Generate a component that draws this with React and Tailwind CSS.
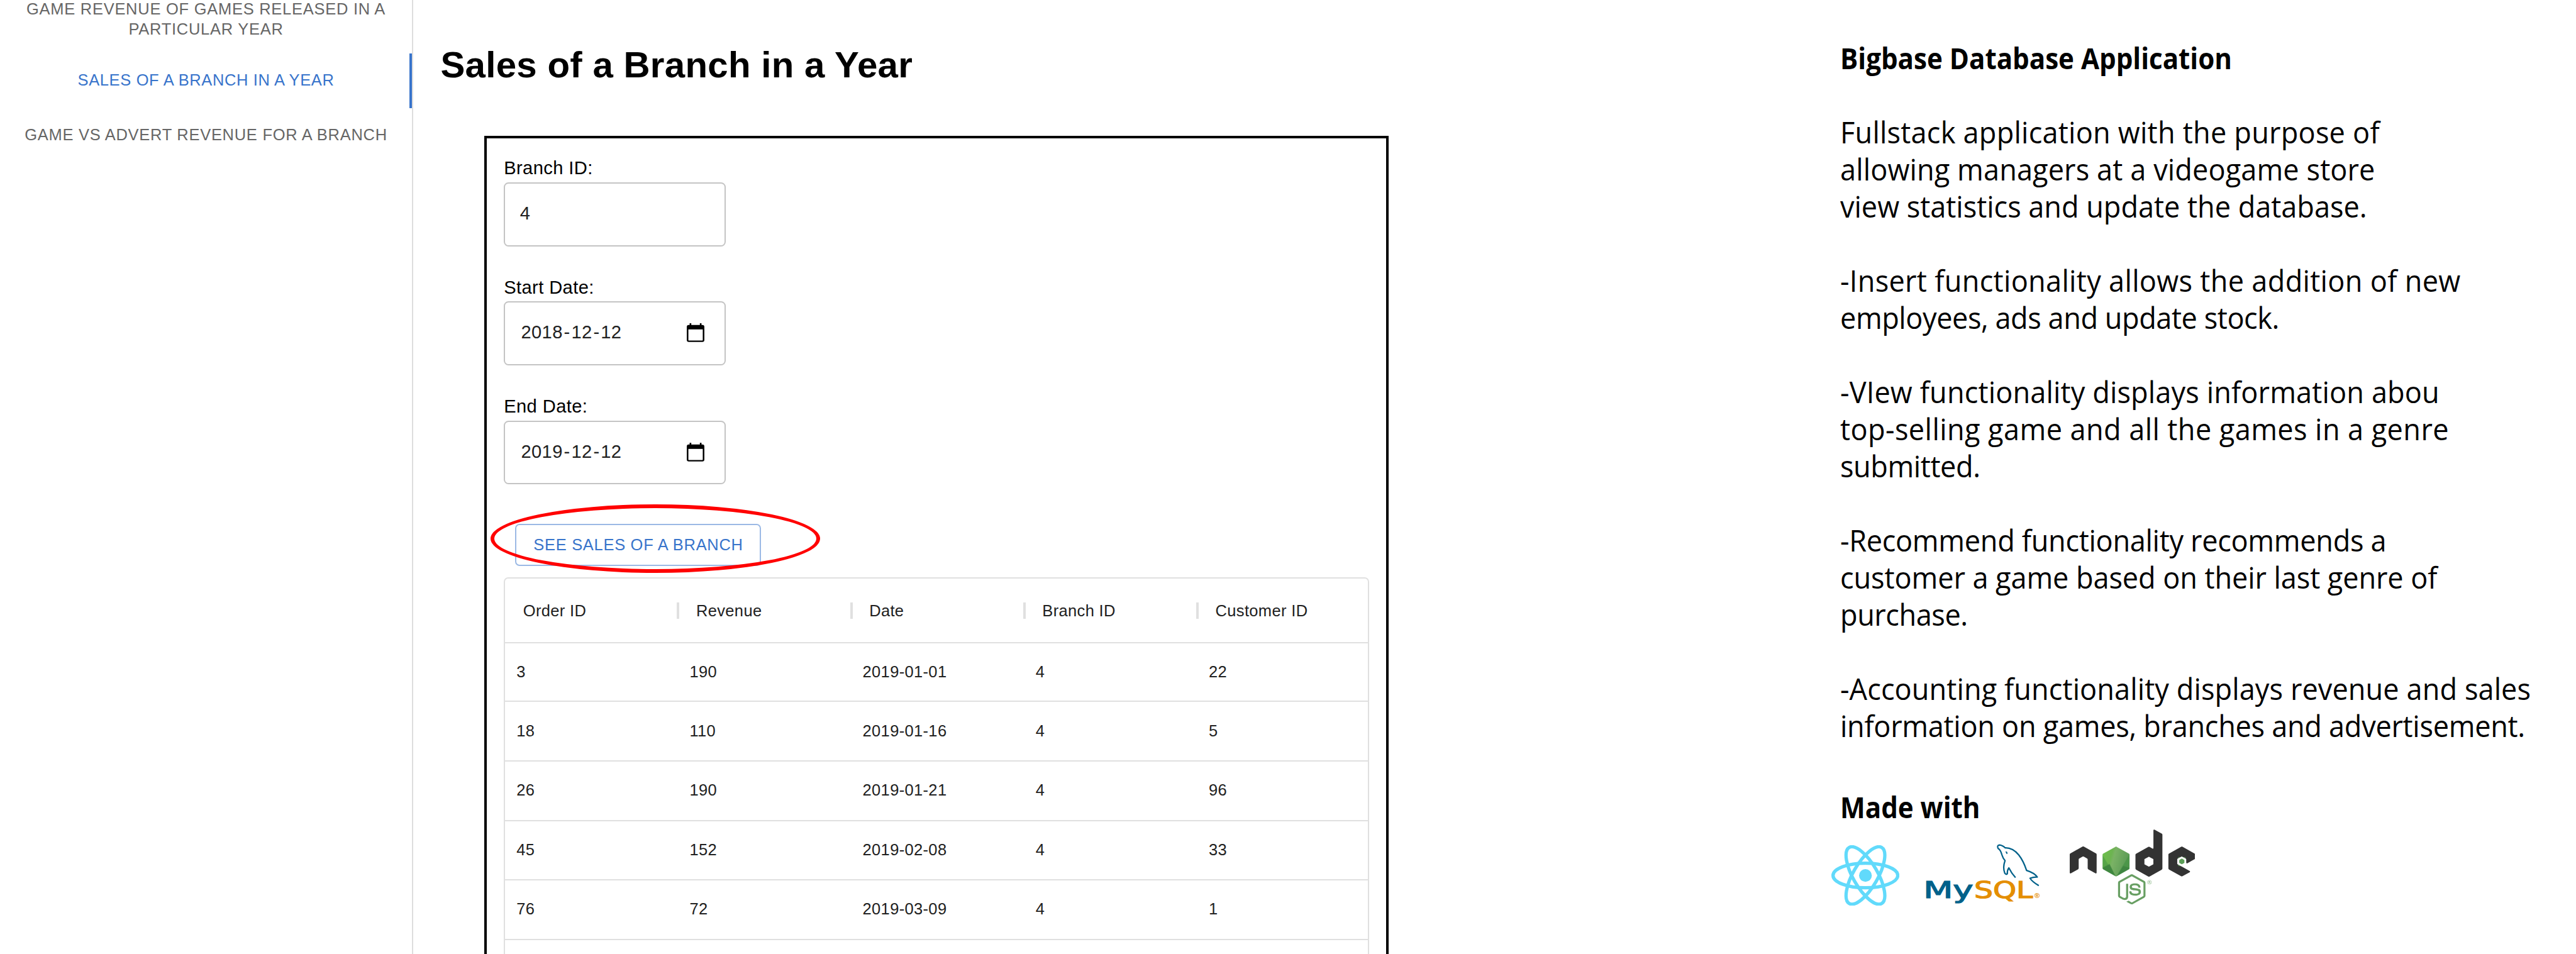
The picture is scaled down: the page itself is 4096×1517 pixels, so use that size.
import React from "react";
import { FaNode } from "react-icons/fa";

const ORDERS = [
  ["3", "190", "2019-01-01", "4", "22"],
  ["18", "110", "2019-01-16", "4", "5"],
  ["26", "190", "2019-01-21", "4", "96"],
  ["45", "152", "2019-02-08", "4", "33"],
  ["76", "72", "2019-03-09", "4", "1"],
];
const COLUMNS = ["Order ID", "Revenue", "Date", "Branch ID", "Customer ID"];

function Sidebar() {
  const tab =
    "flex shrink-0 flex-col items-center justify-center text-center text-[25.49px] leading-[31.8px] text-[#666666]";
  return (
    <nav className="flex h-full w-[657px] shrink-0 flex-col border-r-2 border-[#dddddd]">
      <div className={`${tab} h-[84.6px] justify-end pb-[22px] tracking-[0.74px]`}>
        <span className="whitespace-nowrap">GAME REVENUE OF GAMES RELEASED IN A</span>
        <span>PARTICULAR YEAR</span>
      </div>
      <div className="flex h-[87.4px] shrink-0 items-center border-r-4 border-[#3874cb] pb-[3px] pl-[4px] text-[25.49px] tracking-[0.65px] text-[#3874cb]">
        <span className="flex-1 text-center">SALES OF A BRANCH IN A YEAR</span>
      </div>
      <div className={`${tab} h-[87.4px] pb-[1px] tracking-[0.72px]`}>
        <span className="whitespace-nowrap">GAME VS ADVERT REVENUE FOR A BRANCH</span>
      </div>
    </nav>
  );
}

function CalendarIcon() {
  return (
    <svg viewBox="0 0 30 33" className="h-[30px] w-[28px]" fill="none" preserveAspectRatio="none">
      <rect x="1.4" y="4.5" width="27.2" height="27" rx="2" stroke="black" strokeWidth="2.7" />
      <path d="M1 4h28v6.8H1z" fill="black" />
      <path d="M6.3 0v5M23.7 0v5" stroke="black" strokeWidth="2.8" />
    </svg>
  );
}

function Field({ label, parts, date }) {
  return (
    <div className="flex flex-col">
      <label className="whitespace-nowrap text-[29.13px] leading-[36px] tracking-[0.4px] text-black">{label}</label>
      <div className="mt-[4.6px] flex h-[101.6px] w-[353px] items-center justify-between rounded-[7.5px] border-2 border-[#c4c4c4] pb-[2px] pl-[23.5px] pr-[32px] text-[29.13px] tracking-[0.37px] text-[#212121]">
        <div className={date ? "flex gap-[1.8px] pl-[1.8px]" : "flex"}>
          {parts.map((p, i) => (
            <span key={i}>{p}</span>
          ))}
        </div>
        {date && <CalendarIcon />}
      </div>
    </div>
  );
}

function OrdersTable() {
  return (
    <div className="mt-[18.7px] flex h-[900px] w-[1376px] shrink-0 flex-col rounded-[7px] border-2 border-[#e0e0e0] text-[25.49px] tracking-[0.35px] text-[#212121]">
      <div className="flex h-[103.2px] shrink-0 items-center border-b-2 border-[#e0e0e0]">
        {COLUMNS.map((c, i) => (
          <div
            key={c}
            className="flex w-[275.2px] shrink-0 items-center justify-between pl-[28.6px] last:w-[260px]"
          >
            <span>{c}</span>
            {i < 4 && <span className="-mr-[2px] h-[26px] w-[4px] bg-[#e0e0e0]" />}
          </div>
        ))}
      </div>
      {ORDERS.map((r, i) => (
        <div
          key={i}
          className="flex h-[94.66px] shrink-0 items-center border-b-2 border-[#e0e0e0] pb-[2px] nth-[2]:h-[92.8px]"
        >
          {r.map((v, j) => (
            <span key={j} className="w-[275.2px] shrink-0 pl-[18px] last:w-[260px]">
              {v}
            </span>
          ))}
        </div>
      ))}
    </div>
  );
}

function Main() {
  return (
    <main className="flex h-full w-[2268.5px] shrink-0 flex-col">
      <h1 className="mt-[72.7px] shrink-0 whitespace-nowrap pl-[43.5px] text-[58.25px] font-bold leading-[60px] tracking-[0.26px] text-black">
        Sales of a Branch in a Year
      </h1>
      <section className="relative ml-[113.2px] mt-[83.3px] flex h-[1500px] w-[1438px] shrink-0 flex-col border-4 border-black pl-[27px] pt-[29.5px]">
        <div className="flex flex-col gap-[47.2px]">
          <Field label="Branch ID:" parts={["4"]} />
          <Field label="Start Date:" parts={["2018", "-", "12", "-", "12"]} date />
          <Field label="End Date:" parts={["2019", "-", "12", "-", "12"]} date />
        </div>
        <button className="ml-[18.3px] mt-[62.7px] flex h-[66.5px] w-[391px] shrink-0 items-center justify-center whitespace-nowrap rounded-[7px] border-2 border-[#9bb9e5] pb-[1px] text-[25.49px] tracking-[0.7px] text-[#3874cb]">
          SEE SALES OF A BRANCH
        </button>
        <OrdersTable />
        <div className="absolute left-[5.5px] top-[582px] h-[109px] w-[524px] rounded-[50%] border-[6px] border-[#ff0000]" />
      </section>
    </main>
  );
}

function ReactLogo() {
  return (
    <svg viewBox="-11.5 -10.23 23 20.46" className="mt-[42.4px] h-[96.3px] w-[108.3px] shrink-0">
      <circle r="2.15" fill="#61dafb" />
      <g stroke="#61dafb" strokeWidth="1.12" fill="none">
        <ellipse rx="10.94" ry="4.15" />
        <ellipse rx="10.94" ry="4.15" transform="rotate(60)" />
        <ellipse rx="10.94" ry="4.15" transform="rotate(120)" />
      </g>
    </svg>
  );
}

function MySqlLogo() {
  return (
    <svg viewBox="0 0 720 450" className="ml-[19.8px] mt-[18.6px] h-[136.6px] w-[218.5px] shrink-0">
      <path
        d="M543 249 Q523 228 508 198 Q499 211 500 229 Q494 235 487 226 Q475 196 488 160 Q477 147 472 130 Q465 103 452 96 Q444 80 459 78 Q474 79 489 93 Q528 92 560 130 Q584 160 601 211 Q643 224 657 246 Q639 245 619 252 Q630 270 665 291"
        fill="none"
        stroke="#00618a"
        strokeWidth="7.5"
        strokeLinejoin="round"
      />
      <path d="M490 113 Q500 110 501 120 Q501 126 497 126 Z" fill="#00618a" />
      <g fontFamily="DejaVu Sans" fontSize="125" strokeWidth="4">
        <text x="60" y="357" textLength="262" lengthAdjust="spacingAndGlyphs" fill="#00618a" stroke="#00618a">
          My
        </text>
        <text x="326" y="357" textLength="308" lengthAdjust="spacingAndGlyphs" fill="#e48e00" stroke="#e48e00">
          SQL
        </text>
      </g>
      <text x="656" y="357" textAnchor="middle" fontFamily="Liberation Sans" fontSize="38" fontWeight="bold" fill="#e48e00">
        ®
      </text>
    </svg>
  );
}

function NodeLogo() {
  return (
    <div className="ml-[32.1px] flex shrink-0">
      <svg className="absolute h-0 w-0">
        <defs>
          <linearGradient id="nodeGreen" x1="0" x2="1" y1="0" y2="0.3">
            <stop offset="0.1" stopColor="#6cc04a" />
            <stop offset="0.4" stopColor="#6cb450" />
            <stop offset="0.5" stopColor="#7ab265" />
            <stop offset="1" stopColor="#5a9a55" />
          </linearGradient>
          <pattern id="nodeFill" patternUnits="userSpaceOnUse" width="640" height="512">
            <rect width="640" height="512" fill="#333333" />
            <rect x="160" y="140" width="150" height="170" fill="url(#nodeGreen)" />
            <path d="M165 190 236 310H165z" fill="#56a548" />
            <path d="M165 262 203 240 236 310H165z" fill="#3f873f" />
            <path d="M310 180 236 310H310z" fill="#4c9649" />
            <path d="M310 262 272 250 236 310H310z" fill="#3f8641" />
            <path d="M316 290 390 330V470H240V330z" fill="#689f63" />
            <rect x="390" y="320" width="40" height="40" fill="#8bb887" />
            <rect x="553" y="205" width="37" height="45" fill="#5c9e57" />
          </pattern>
        </defs>
      </svg>
      <FaNode preserveAspectRatio="none" className="h-[155.3px] w-[199.6px] fill-[url(#nodeFill)] stroke-none" />
    </div>
  );
}

function About() {
  const line = "h-[59px] origin-left scale-x-[0.96] whitespace-nowrap";
  return (
    <aside className="flex h-full flex-1 flex-col pt-[63.1px] font-['Open_Sans',sans-serif] text-[47px] leading-[59px] text-black">
      <h2 className="mb-[59px] origin-left scale-x-[0.896] whitespace-nowrap font-bold">Bigbase Database Application</h2>
      <p className="mb-[59px]">
        <span className={`block ${line} tracking-[0.22px]`}>Fullstack application with the purpose of</span>
        <span className={`block ${line} tracking-[0.1px]`}>allowing managers at a videogame store</span>
        <span className={`block ${line} tracking-[-0.04px]`}>view statistics and update the database.</span>
      </p>
      <p className="mb-[59px]">
        <span className={`block ${line} tracking-[0.31px]`}>-Insert functionality allows the addition of new</span>
        <span className={`block ${line} tracking-[-0.47px]`}>employees, ads and update stock.</span>
      </p>
      <p className="mb-[59px]">
        <span className={`block ${line} tracking-[0.13px]`}>-VIew functionality displays information abou</span>
        <span className={`block ${line} tracking-[0.42px]`}>top-selling game and all the games in a genre</span>
        <span className={`block ${line} tracking-[-0.45px]`}>submitted.</span>
      </p>
      <p className="mb-[59px]">
        <span className={`block ${line} tracking-[-0.33px]`}>-Recommend functionality recommends a</span>
        <span className={`block ${line} tracking-[-0.1px]`}>customer a game based on their last genre of</span>
        <span className={`block ${line} tracking-[-0.47px]`}>purchase.</span>
      </p>
      <p>
        <span className={`block ${line} tracking-[0.08px]`}>-Accounting functionality displays revenue and sales</span>
        <span className={`block ${line} tracking-[-0.31px]`}>information on games, branches and advertisement.</span>
      </p>
      <h3 className="mt-[69.7px] origin-left scale-x-[0.896] whitespace-nowrap font-bold">Made with</h3>
      <div className="-ml-[13.5px] -mt-[11.6px] flex items-start">
        <ReactLogo />
        <MySqlLogo />
        <NodeLogo />
      </div>
    </aside>
  );
}

export default function App() {
  return (
    <div className="flex h-[1517px] w-[4096px] overflow-hidden bg-white font-['Liberation_Sans',Arial,sans-serif]">
      <Sidebar />
      <Main />
      <About />
    </div>
  );
}
